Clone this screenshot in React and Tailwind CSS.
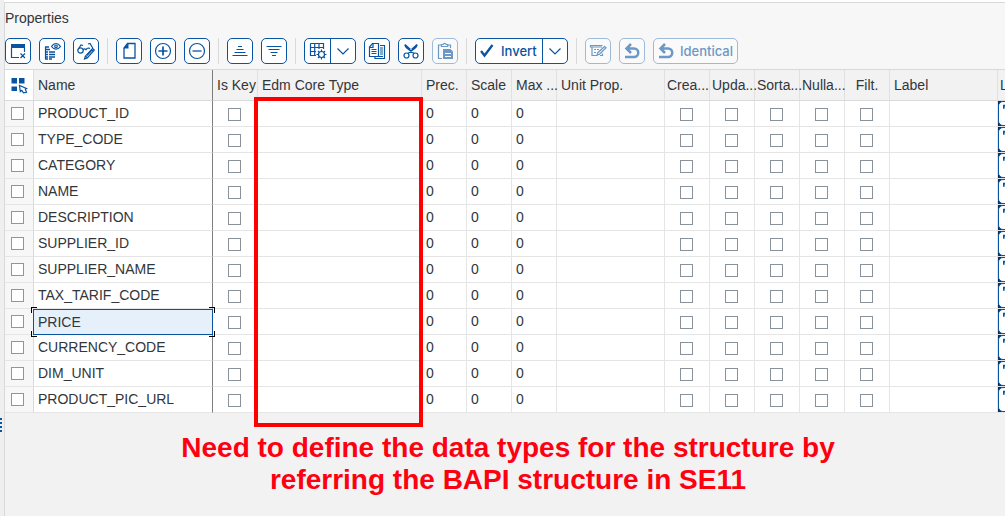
import React from "react";

const FIELDS = [
  "PRODUCT_ID", "TYPE_CODE", "CATEGORY", "NAME", "DESCRIPTION", "SUPPLIER_ID",
  "SUPPLIER_NAME", "TAX_TARIF_CODE", "PRICE", "CURRENCY_CODE", "DIM_UNIT", "PRODUCT_PIC_URL",
];
const FLAGS = [
  { id: "creatable", title: "Crea..." },
  { id: "updatable", title: "Upda..." },
  { id: "sortable", title: "Sorta..." },
  { id: "nullable", title: "Nulla..." },
];
const SELECTED = "PRICE";

function Icon({ children, className = "size-5" }) {
  return (
    <svg viewBox="0 0 20 20" className={className} fill="none" stroke="currentColor" strokeWidth="1.2" aria-hidden="true">
      {children}
    </svg>
  );
}

const Chevron = () => (
  <Icon><path d="M4.500 7.500 10 13l5.500-5.500" /></Icon>
);
const Undo = () => (
  <Icon className="size-5 shrink-0">
    <path d="M9 3 4.500 7.500 9 12M4.500 7.500h7.500a4.200 4.200 0 0 1 0 8.500H3" strokeWidth="2.500" />
  </Icon>
);

function Tool({ label, children, disabled }) {
  return (
    <button
      type="button"
      aria-label={label}
      disabled={disabled}
      className="flex size-[26px] shrink-0 items-center justify-center rounded-[5px] border border-[#0854a0] bg-white text-[#0854a0] disabled:border-[#9dbbd9] disabled:bg-[#fafafa] disabled:text-[#6b98c6]"
    >
      {children}
    </button>
  );
}

const Divider = () => <span className="h-[26px] w-px shrink-0 bg-[#d9d9d9]" />;

function Toolbar() {
  return (
    <div className="flex h-[26px] items-center gap-2" role="toolbar">
      <Tool label="Close">
        <Icon>
          <path d="M3 3h14v4H3z" fill="currentColor" stroke="none" />
          <path d="M3.500 7v9.500H11M16.500 7v4M12.500 12.500l4.500 4.500m0-4.500L12.500 17" />
        </Icon>
      </Tool>
      <Tool label="Details">
        <Icon>
          <path d="M9.500 5.500c2.500-4 6.500-4 9 0-2.500 3.500-6.500 3.500-9 0z" />
          <circle cx="14" cy="5.300" r="1.300" />
          <path d="M3 6h4M3 8.500h5M3 11h3m1 0h6M3 13.500h3m1 0h6M3 16h3m1 0h6M3 18h3m1 0h3" strokeWidth="1.400" />
          <path d="M3.500 6v12" />
        </Icon>
      </Tool>
      <Tool label="Display or change">
        <Icon>
          <circle cx="4.500" cy="9.500" r="2.700" />
          <path d="M2 8.500 5 4l2 .5M7 9c1-1.500 2-1.500 3 0m0 0c.5-1.800 2.500-2.500 4-1.500M12 3l2-.5 3 5" />
          <path d="m16.500 7.500 1.800 1.500-7 8-2.800 1 .8-2.800zM15.300 8.800l1.700 1.500M9.500 15l1.500 1.500" />
          <path d="m11 14.500 5-5.500" />
        </Icon>
      </Tool>
      <Divider />
      <Tool label="New">
        <Icon>
          <path d="M8.500 2.500h7.500v14.500h-11V7z" strokeWidth="1.300" />
          <path d="M4.500 7.500 9.500 2v5.500z" fill="currentColor" stroke="none" />
        </Icon>
      </Tool>
      <Tool label="Add row">
        <Icon><circle cx="10" cy="10" r="7.500" /><path d="M10 5.500v9M5.500 10h9" strokeWidth="1.700" /></Icon>
      </Tool>
      <Tool label="Remove row">
        <Icon><circle cx="10" cy="10" r="7.500" /><path d="M5.500 10h9" strokeWidth="1.300" /></Icon>
      </Tool>
      <Divider />
      <Tool label="Sort ascending">
        <Icon><path d="M8 5.500h4M6.500 8.500h7M4.500 11.500h11M2.500 14.500h15" strokeWidth="1.100" /></Icon>
      </Tool>
      <Tool label="Sort descending">
        <Icon><path d="M2.500 5.500h15M4.500 8.500h11M6.500 11.500h7M8 14.500h4" strokeWidth="1.100" /></Icon>
      </Tool>
      <Divider />
      <div className="flex h-[26px] shrink-0 overflow-hidden rounded-[5px] border border-[#0854a0] bg-white text-[#0854a0]">
        <button type="button" aria-label="Table settings" className="flex w-[25px] items-center justify-center">
          <Icon>
            <path d="M2.500 2.500h13V8M2.500 2.500v12H8M2.500 6.500h13M2.500 10.500H8M6.700 2.500v12M11 2.500V8" />
            <circle cx="13.500" cy="13.500" r="3" />
            <path d="M13.500 8.500v2m0 6v2m-5-5h2m6 0h2M10 10l1.400 1.400m4.200 4.200L17 17m0-7-1.400 1.400m-4.200 4.200L10 17" />
          </Icon>
        </button>
        <button type="button" aria-label="More table settings" className="flex w-[25px] items-center justify-center border-l border-[#0854a0]"><Chevron /></button>
      </div>
      <Tool label="Copy">
        <Icon>
          <path d="M5.500 2.500h6v13h-9V6z" />
          <path d="M2.500 6.500h3.500v-4M4.500 8.500h5M4.500 10.500h5M4.500 12.500h5" />
          <path d="M13 4.500h4.500v13H8V16M13 7h3M13 9h3M13 11h3M13 13h3M10 15.500h6" />
        </Icon>
      </Tool>
      <Tool label="Cut">
        <Icon>
          <circle cx="5.500" cy="14.500" r="2.500" /><circle cx="14.500" cy="14.500" r="2.500" />
          <path d="M4 3.500c-.3 2 1 3 3 4.500l6 4.500M16 3.500c.3 2-1 3-3 4.500l-6 4.500M4 3.500l5.500 5M16 3.500l-5.500 5" />
        </Icon>
      </Tool>
      <Tool label="Paste" disabled>
        <Icon>
          <path d="M7 4H3.500v13.500H7M12 4h3.500v3M6.500 5.500v-2H8a1.700 1.700 0 0 1 3.200 0h1.500v2z" />
          <path d="M8 8h7.500L18 10.500V18H8z" fill="currentColor" stroke="none" />
          <path d="M10 12.500h6M10 15.500h6" stroke="white" />
        </Icon>
      </Tool>
      <Divider />
      <div className="flex h-[26px] shrink-0 overflow-hidden rounded-[5px] border border-[#0854a0] bg-white text-[#0854a0]">
        <button type="button" className="flex w-[66px] items-center gap-1 pl-[1px] font-['Inter','Noto_Sans',sans-serif] text-[13px] leading-4 font-medium">
          <Icon className="size-5 shrink-0"><path d="m4 10 3.500 4.500L15.500 4" strokeWidth="2.300" /></Icon>
          Invert
        </button>
        <button type="button" aria-label="More invert options" className="flex w-[25px] items-center justify-center border-l border-[#0854a0]"><Chevron /></button>
      </div>
      <Divider />
      <Tool label="Edit" disabled>
        <Icon>
          <path d="M14.500 4.500h-12v1.500h1.500v8.500H9m5.500-2v2H12M4 6h10M6 8.500h2m1 0h2M6 11.500h2" />
          <path d="m16.500 5.500 1.500 1.200-6.500 6.500-2.500 1 .8-2.500z" />
        </Icon>
      </Tool>
      <Tool label="Undo" disabled><Undo /></Tool>
      <button
        type="button"
        disabled
        className="flex h-[26px] shrink-0 items-center gap-1 rounded-[5px] border border-[#9dbbd9] bg-[#fafafa] pr-1 pl-[2px] font-['Inter','Noto_Sans',sans-serif] text-[13px] leading-4 font-medium text-[#6b98c6]"
      >
        <Undo />
        Identical
      </button>
    </div>
  );
}

function Check({ label, className = "" }) {
  return (
    <input type="checkbox" aria-label={label} className={`block size-[13px] appearance-none border bg-white ${className}`} />
  );
}

const Th = ({ children, className = "border-r-[#e0e0e0] pl-1 text-left" }) => (
  <th scope="col" className={`h-[31px] border-r border-b border-b-[#d9d9d9] py-0 pr-0 font-normal ${className}`}>
    {children}
  </th>
);
const Td = ({ children, className = "border-r-[#e5e5e5] p-0" }) => (
  <td className={`h-[26px] border-r border-b border-b-[#e5e5e5] ${className}`}>{children}</td>
);

const FlagCell = ({ label }) => (
  <Td><Check label={label} className="mt-[2px] ml-[15px] border-[#89919a]" /></Td>
);
const NumberCell = () => <Td className="border-r-[#e5e5e5] p-0 pb-[2px] pl-1">0</Td>;

function FocusCorners() {
  return (
    <>
      <span className="absolute -top-[3px] -left-[3px] size-[6px] border-t border-l border-black" />
      <span className="absolute -top-[3px] -right-[3px] size-[6px] border-t border-r border-black" />
      <span className="absolute -bottom-[3px] -left-[3px] size-[6px] border-b border-l border-black" />
      <span className="absolute -right-[3px] -bottom-[3px] size-[6px] border-r border-b border-black" />
    </>
  );
}

function NameCell({ name }) {
  if (name !== SELECTED) return <Td className="border-r-[#7d7d7d] p-0 pb-[2px] pl-1">{name}</Td>;
  return (
    <Td className="border-r-[#7d7d7d] p-0">
      <div className="relative -mr-px -mb-px -ml-px flex h-[26px] items-center border border-[#0854a0] bg-[#e5f0fa] pl-1">
        {name}
        <FocusCorners />
      </div>
    </Td>
  );
}

function PropertiesTable() {
  return (
    <table className="w-[1101px] table-fixed border-separate border-spacing-0 border-t border-[#d9d9d9] bg-white text-sm leading-4 whitespace-nowrap">
      <colgroup>
        <col className="w-[29px]" />
        <col className="w-[179px]" />
        <col className="w-[45px]" />
        <col className="w-[164px]" />
        <col className="w-[45px]" />
        <col className="w-[45px]" />
        <col className="w-[45px]" />
        <col className="w-[108px]" />
        <col className="w-[45px]" />
        <col className="w-[45px]" />
        <col className="w-[45px]" />
        <col className="w-[45px]" />
        <col className="w-[45px]" />
        <col className="w-[108px]" />
        <col className="w-[108px]" />
      </colgroup>
      <thead className="bg-[#f2f2f2]">
        <tr>
          <Th className="border-r-[#e0e0e0] bg-white pl-0">
            <button type="button" aria-label="Select all" className="mx-auto flex text-[#0854a0]">
              <Icon>
                <path d="M2.500 3h5.500v5.500H2.500zM10 3h5.500v5.500H10zM2.500 11.500h5.500V16H2.500z" fill="currentColor" stroke="none" />
                <path d="m10.500 10.500.8 6 1.500-1.200 1.700 2.500 3-.5-1.200-3.300 1.200-.5z" fill="white" />
              </Icon>
            </button>
          </Th>
          <Th className="border-r-[#7d7d7d] pl-1 text-left">Name</Th>
          <Th>Is Key</Th>
          <Th>Edm Core Type</Th>
          <Th>Prec.</Th>
          <Th>Scale</Th>
          <Th>Max ...</Th>
          <Th>Unit Prop.</Th>
          {FLAGS.map((flag) => (
            <Th key={flag.id} className="border-r-[#e0e0e0] pl-[2px] text-left">{flag.title}</Th>
          ))}
          <Th className="border-r-[#e0e0e0] pl-0 text-center">Filt.</Th>
          <Th>Label</Th>
          <Th className="border-r-[#e0e0e0] pl-[2px] text-left">L</Th>
        </tr>
      </thead>
      <tbody>
        {FIELDS.map((name) => (
          <tr key={name}>
            <Td className="border-r-[#d9d9d9] bg-[#f7f7f7] p-0">
              <Check label={`Select ${name}`} className="ml-[6px] border-[#8b9a94]" />
            </Td>
            <NameCell name={name} />
            <FlagCell label={`${name} is key`} />
            <Td />
            <NumberCell />
            <NumberCell />
            <NumberCell />
            <Td />
            {FLAGS.map((flag) => <FlagCell key={flag.id} label={`${name} ${flag.id}`} />)}
            <FlagCell label={`${name} filterable`} />
            <Td />
            <Td className="border-r-[#e5e5e5] bg-[#0b2d50] p-0">
              <button type="button" aria-label={`${name} label text`} className="flex h-[25px] w-full rounded-[5px] border border-[#0854a0] bg-white pt-[2px] pl-1 text-[#0854a0]">
                <Icon className="size-4"><path d="M1 1v5M1 2h12v10H4" strokeWidth="2" /></Icon>
              </button>
            </Td>
          </tr>
        ))}
      </tbody>
    </table>
  );
}

export default function App() {
  return (
    <div className="flex min-h-screen overflow-hidden bg-[#edeff0] font-['Liberation_Sans',Arial,sans-serif] text-[#32363a]">
      <div className="flex w-1 shrink-0 flex-col gap-[2px] pt-[418px]">
        <span className="h-[2px] w-[2px] bg-[#0854a0]" />
        <span className="h-[2px] w-[2px] bg-[#0854a0]" />
        <span className="h-[2px] w-[2px] bg-[#0854a0]" />
        <span className="h-[2px] w-[2px] bg-[#0854a0]" />
      </div>
      <div className="flex min-w-0 flex-1 flex-col bg-white pt-[2px]">
        <main className="min-w-0 flex-1 overflow-hidden border-t border-l border-[#d9d9d9] bg-[#f2f2f2]">
          <header className="bg-[#f7f7f7] pt-[7px] pb-[5px]">
            <h1 className="mb-3 text-sm leading-4">Properties</h1>
            <Toolbar />
          </header>
          <div className="relative">
            <PropertiesTable />
            <div className="pointer-events-none absolute top-[28px] left-[249px] h-[330px] w-[169px] border-4 border-[#fe0000]" />
          </div>
          <p className="pt-[19px] pl-[6px] text-center text-[28px] leading-8 font-bold text-[#fe0010]">
            Need to define the data types for the structure by
            <br />
            referring the BAPI structure in SE11
          </p>
        </main>
      </div>
    </div>
  );
}
